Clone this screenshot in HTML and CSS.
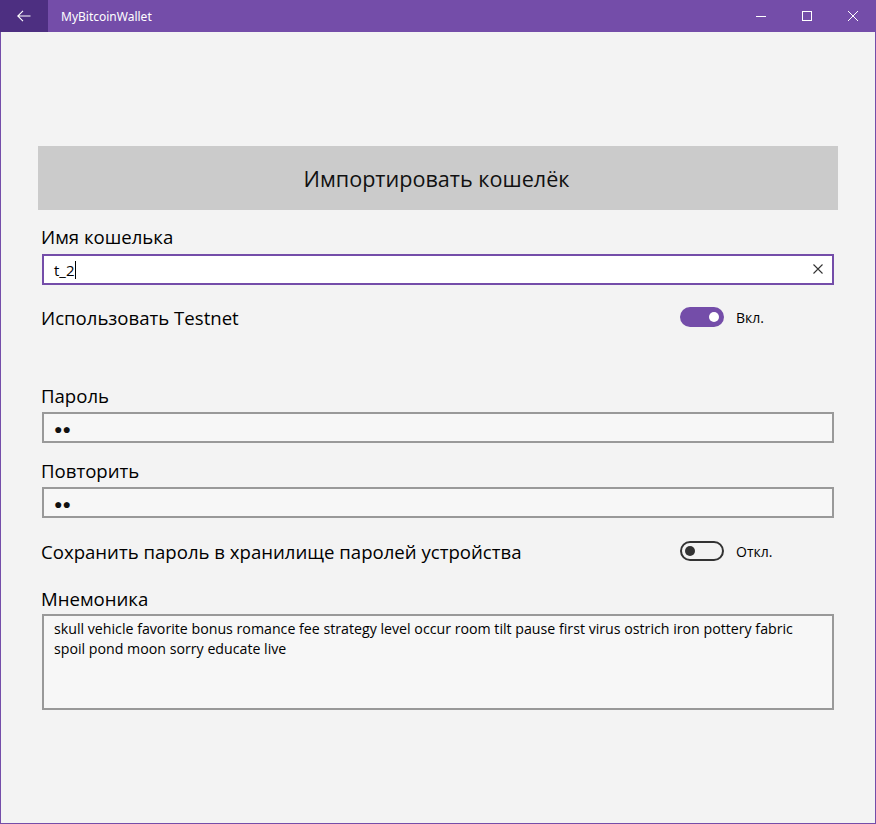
FILE: index.html
```html
<!DOCTYPE html>
<html lang="ru">
<head>
<meta charset="utf-8">
<title>MyBitcoinWallet</title>
<link rel="stylesheet" href="styles.css">
</head>
<body>
<div class="window">
  <div class="titlebar">
    <div class="back">
      <svg width="14" height="12" viewBox="0 0 14 12"><path d="M6 0.8 L0.8 6 L6 11.2 M0.8 6 H13.5" fill="none" stroke="#fff" stroke-width="1.1"/></svg>
    </div>
    <div class="apptitle">MyBitcoinWallet</div>
    <div class="controls">
      <div class="ctl"><svg width="10" height="10" viewBox="0 0 10 10"><path d="M0 5.5 H10" stroke="#fff" stroke-width="1"/></svg></div>
      <div class="ctl"><svg width="10" height="10" viewBox="0 0 10 10"><rect x="0.5" y="0.5" width="9" height="9" fill="none" stroke="#fff" stroke-width="1"/></svg></div>
      <div class="ctl"><svg width="10" height="10" viewBox="0 0 10 10"><path d="M0 0 L10 10 M10 0 L0 10" stroke="#fff" stroke-width="1"/></svg></div>
    </div>
  </div>
  <div class="content">
    <div class="header">Импортировать кошелёк</div>
    <div class="label first">Имя кошелька</div>
    <div class="input focused">
      <span class="value">t_2</span><span class="caret"></span>
      <span class="clear"><svg width="10" height="10" viewBox="0 0 10 10"><path d="M0.5 0.5 L9.5 9.5 M9.5 0.5 L0.5 9.5" stroke="#333" stroke-width="1.1"/></svg></span>
    </div>
    <div class="row testnet">
      <div class="rowlabel">Использовать Testnet</div>
      <div class="switchgroup"><span class="switch on"><span class="knob"></span></span><span class="state">Вкл.</span></div>
    </div>
    <div class="label pass">Пароль</div>
    <div class="input"><span class="dots">●●</span></div>
    <div class="label repeat">Повторить</div>
    <div class="input"><span class="dots">●●</span></div>
    <div class="row save">
      <div class="rowlabel">Сохранить пароль в хранилище паролей устройства</div>
      <div class="switchgroup"><span class="switch off"><span class="knob"></span></span><span class="state">Откл.</span></div>
    </div>
    <div class="label mnem">Мнемоника</div>
    <div class="textarea">skull vehicle favorite bonus romance fee strategy level occur room tilt pause first virus ostrich iron pottery fabric spoil pond moon sorry educate live</div>
  </div>
</div>
</body>
</html>
```

FILE: styles.css
```css
* { box-sizing: border-box; }
html, body { margin: 0; padding: 0; }
body {
  width: 876px;
  height: 824px;
  font-family: "Open Sans", "Noto Sans", sans-serif;
  color: #000;
  overflow: hidden;
}
.window {
  width: 876px;
  height: 824px;
  border: 1px solid #744da9;
  border-top: none;
  background: #f3f3f3;
  display: flex;
  flex-direction: column;
}
.titlebar {
  height: 32px;
  margin: 0 -1px;
  background: #744da9;
  display: flex;
  align-items: center;
  color: #fff;
  flex: none;
}
.back {
  width: 48px;
  height: 32px;
  background: #4d2f81;
  display: flex;
  align-items: center;
  justify-content: center;
}
.apptitle {
  font-family: "Noto Sans", sans-serif;
  font-size: 12px;
  margin-left: 13px;
  flex: 1;
}
.controls { display: flex; }
.ctl {
  width: 46px;
  height: 32px;
  display: flex;
  align-items: center;
  justify-content: center;
}
.content {
  padding: 114px 37px 0 37px;
  display: flex;
  flex-direction: column;
}
.header {
  width: 800px;
  height: 64px;
  background: #cbcbcb;
  display: flex;
  align-items: center;
  justify-content: center;
  font-size: 21.6px;
  color: #111;
  padding-top: 1px;
  padding-right: 3px;
}
.label, .rowlabel {
  font-size: 18.6px;
  line-height: 24px;
  height: 24px;
  padding-left: 3px;
  color: #000;
  white-space: nowrap;
}
.label.first { margin-top: 15px; }
.label.pass { margin-top: 50px; }
.label.repeat { margin-top: 16px; }
.label.mnem { margin-top: 19px; }
.label + .input, .label + .textarea { margin-top: 5px; }
.label.pass + .input, .label.repeat + .input { margin-top: 4px; }
.label.mnem + .textarea { margin-top: 3px; }
.input {
  margin-left: 4px;
  width: 792px;
  height: 31px;
  border: 2px solid #999;
  background: #f7f7f7;
  display: flex;
  align-items: center;
  padding-left: 10px;
  font-size: 15px;
  position: relative;
}
.input.focused {
  border-color: #744da9;
  background: #fff;
}
.caret {
  display: inline-block;
  width: 1px;
  height: 18px;
  background: #000;
}
.clear {
  position: absolute;
  right: 9px;
  top: 8px;
  width: 10px;
  height: 10px;
  display: flex;
}
.dots {
  font-size: 14px;
  letter-spacing: 0px;
  color: #111;
  padding-top: 1px;
}
.row {
  display: flex;
  align-items: center;
  height: 32px;
  width: 800px;
}
.row.testnet { margin-top: 17px; }
.row.save { margin-top: 18px; }
.rowlabel { flex: 1; }
.switchgroup {
  width: 158px;
  display: flex;
  align-items: center;
  margin-top: -2px;
}
.switch {
  width: 44px;
  height: 20px;
  border-radius: 10px;
  display: flex;
  align-items: center;
  flex: none;
}
.switch.on {
  background: #744da9;
  justify-content: flex-end;
  padding-right: 5px;
}
.switch.on .knob { background: #fff; }
.switch.off {
  border: 2px solid #333;
  padding-left: 3px;
}
.switch.off .knob { background: #333; }
.knob {
  width: 10px;
  height: 10px;
  border-radius: 50%;
}
.state {
  margin-left: 12px;
  font-size: 14px;
}
.textarea {
  margin-left: 4px;
  width: 792px;
  height: 96px;
  border: 2px solid #999;
  background: #f7f7f7;
  padding: 3px 10px 0 10px;
  font-size: 14.2px;
  line-height: 20px;
}
```
